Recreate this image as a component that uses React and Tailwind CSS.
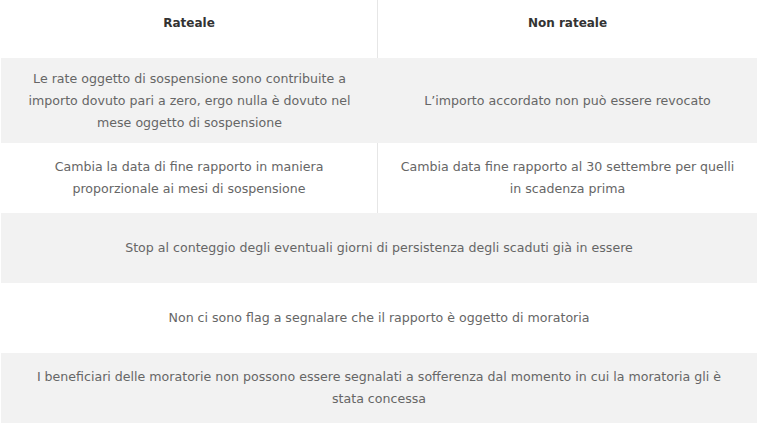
import React from "react";

const spanRows = [
  {
    text: "Stop al conteggio degli eventuali giorni di persistenza degli scaduti già in essere",
    bg: "bg-[#f2f2f2]",
  },
  {
    text: "Non ci sono flag a segnalare che il rapporto è oggetto di moratoria",
    bg: "bg-white",
  },
  {
    text: "I beneficiari delle moratorie non possono essere segnalati a sofferenza dal momento in cui la moratoria gli è stata concessa",
    bg: "bg-[#f2f2f2]",
  },
];

export default function App() {
  return (
    <div
      className="w-[760px] h-[427px] bg-white text-[12.6px] leading-[22px] text-[#666666] overflow-hidden"
      style={{ fontFamily: '"DejaVu Sans", Verdana, sans-serif' }}
    >
      <div className="ml-[1px] w-[756px]">
        {/* Header */}
        <div className="grid grid-cols-[377px_1fr] h-[58px] text-[12px]">
          <div className="border-r border-[#e6e6e6] pt-[12px] text-center font-bold text-[#333333]">
            Rateale
          </div>
          <div className="pt-[12px] text-center font-bold text-[#333333]">
            Non rateale
          </div>
        </div>

        {/* Row 1 */}
        <div className="grid grid-cols-[377px_1fr] h-[85px] bg-[#f2f2f2]">
          <div className="flex items-center justify-center px-[26px] text-center">
            Le rate oggetto di sospensione sono contribuite a importo dovuto pari a zero, ergo nulla è dovuto nel mese oggetto di sospensione
          </div>
          <div className="flex items-center justify-center px-[22px] text-center">
            L’importo accordato non può essere revocato
          </div>
        </div>

        {/* Row 2 */}
        <div className="grid grid-cols-[377px_1fr] h-[70px]">
          <div className="flex items-center justify-center border-r border-[#e6e6e6] px-[40px] text-center">
            Cambia la data di fine rapporto in maniera proporzionale ai mesi di sospensione
          </div>
          <div className="flex items-center justify-center px-[20px] text-center">
            Cambia data fine rapporto al 30 settembre per quelli in scadenza prima
          </div>
        </div>

        {spanRows.map((r) => (
          <div
            key={r.text}
            className={`flex h-[70px] items-center justify-center px-[30px] text-center ${r.bg}`}
          >
            {r.text}
          </div>
        ))}
      </div>
    </div>
  );
}
